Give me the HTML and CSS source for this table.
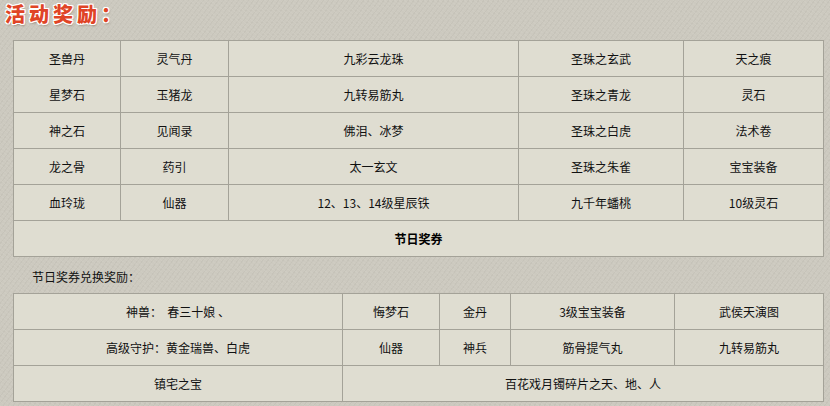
FILE: index.html
```html
<!DOCTYPE html>
<html lang="zh">
<head>
<meta charset="utf-8">
<link rel="stylesheet" href="styles.css">
</head>
<body>
<div class="page">
  <h1 class="title">活动奖励：</h1>
  <table class="grid grid-a">
    <colgroup>
      <col class="a1"><col class="a2"><col class="a3"><col class="a4"><col class="a5">
    </colgroup>
    <tr><td>圣兽丹</td><td>灵气丹</td><td>九彩云龙珠</td><td>圣珠之玄武</td><td>天之痕</td></tr>
    <tr><td>星梦石</td><td>玉猪龙</td><td>九转易筋丸</td><td>圣珠之青龙</td><td>灵石</td></tr>
    <tr><td>神之石</td><td>见闻录</td><td>佛泪、冰梦</td><td>圣珠之白虎</td><td>法术卷</td></tr>
    <tr><td>龙之骨</td><td>药引</td><td>太一玄文</td><td>圣珠之朱雀</td><td>宝宝装备</td></tr>
    <tr><td>血玲珑</td><td>仙器</td><td>12、13、14级星辰铁</td><td>九千年蟠桃</td><td>10级灵石</td></tr>
    <tr><td colspan="5" class="strong">节日奖券</td></tr>
  </table>
  <p class="sub">节日奖券兑换奖励：</p>
  <table class="grid grid-b">
    <colgroup>
      <col class="b1"><col class="b2"><col class="b3"><col class="b4"><col class="b5">
    </colgroup>
    <tr><td>神兽：&nbsp;&nbsp;春三十娘&nbsp;、</td><td>悔梦石</td><td>金丹</td><td>3级宝宝装备</td><td>武侯天演图</td></tr>
    <tr><td>高级守护：黄金瑞兽、白虎</td><td>仙器</td><td>神兵</td><td>筋骨提气丸</td><td>九转易筋丸</td></tr>
    <tr><td>镇宅之宝</td><td colspan="4">百花戏月镯碎片之天、地、人</td></tr>
  </table>
</div>
</body>
</html>
```
FILE: styles.css
```css
html, body {
  margin: 0;
  padding: 0;
}
body {
  background-color: #ccc9bf;
  background-image:
    repeating-linear-gradient(37deg, rgba(255,255,255,0.05) 0 1px, transparent 1px 3px),
    repeating-linear-gradient(-53deg, rgba(0,0,0,0.03) 0 1px, transparent 1px 4px);
  font-family: "Noto Sans CJK SC", "Noto Sans", sans-serif;
  font-size: 12px;
  color: #111;
  width: 830px;
  height: 406px;
  overflow: hidden;
}
.page {
  padding: 0 0 0 13px;
}
.title {
  margin: 0 0 0 -8px;
  height: 40px;
  font-size: 20px;
  line-height: 28px;
  font-weight: 900;
  letter-spacing: 4px;
  color: #e04426;
  text-shadow:
    1px 0 0 #fff, -1px 0 0 #fff, 0 1px 0 #fff, 0 -1px 0 #fff,
    1px 1px 0 #fff, -1px -1px 0 #fff, 1px -1px 0 #fff, -1px 1px 0 #fff,
    1px 2px 2px rgba(90,60,40,0.45);
}
.grid {
  border-collapse: collapse;
  table-layout: fixed;
  width: 811px;
  background: #dfddd1;
}
.grid td {
  border: 1px solid #a4a298;
  height: 35px;
  padding: 0;
  text-align: center;
  vertical-align: middle;
  line-height: 16px;
  white-space: nowrap;
}
.grid .strong {
  font-weight: bold;
  color: #000;
}
.a1 { width: 107px; }
.a2 { width: 108px; }
.a3 { width: 290px; }
.a4 { width: 165px; }
.a5 { width: 140px; }
.b1 { width: 329px; }
.b2 { width: 97px; }
.b3 { width: 71px; }
.b4 { width: 164px; }
.b5 { width: 149px; }
.sub {
  margin: 0;
  height: 36px;
  line-height: 40px;
  padding-left: 19px;
  font-size: 12px;
}
```
